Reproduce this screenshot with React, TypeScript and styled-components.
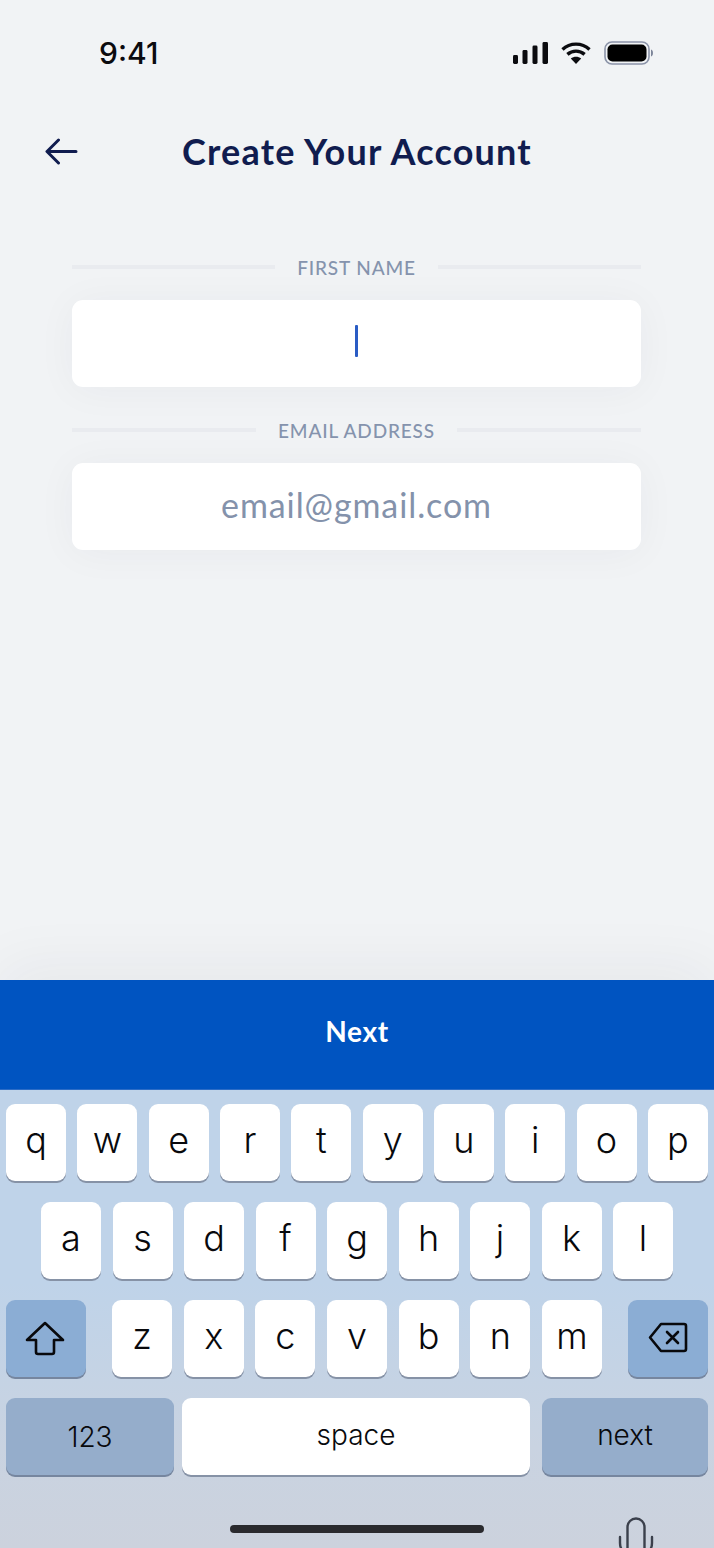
import React from 'react';
import styled, { createGlobalStyle } from 'styled-components';

const GlobalStyle = createGlobalStyle`
  html, body {
    margin: 0;
    padding: 0;
    background: #f1f3f5;
  }
  * {
    box-sizing: border-box;
  }
`;

const Page = styled.div`
  display: flex;
  flex-direction: column;
  width: 714px;
  height: 1548px;
  overflow: hidden;
  background: #f1f3f5;
  font-family: Lato, "Noto Sans", sans-serif;
`;

const StatusBar = styled.div`
  display: flex;
  align-items: center;
  justify-content: space-between;
  height: 106px;
  padding: 0 61px 0 99px;
`;

const Time = styled.span`
  font-family: Inter, sans-serif;
  font-size: 30px;
  font-weight: 500;
  color: #0b0b0f;
`;

const StatusIcons = styled.div`
  display: flex;
  align-items: center;
  gap: 13px;
`;

const Header = styled.header`
  display: grid;
  grid-template-columns: 1fr auto 1fr;
  align-items: center;
  height: 92px;
  padding: 0 45px 2px;
`;

const BackIcon = styled.svg`
  display: block;
  width: 33px;
  height: 27px;
`;

const Title = styled.h1`
  margin: 0;
  font-size: 36px;
  font-weight: 700;
  letter-spacing: 1.2px;
  color: #101c4f;
`;

const Form = styled.main`
  flex: 1;
  display: flex;
  flex-direction: column;
  gap: 33px;
  padding: 59px 73px 0 72px;
`;

const Field = styled.div`
  display: flex;
  flex-direction: column;
  gap: 23px;
`;

const LabelRow = styled.div`
  display: flex;
  align-items: center;
  gap: 22px;
  height: 20px;

  &::before,
  &::after {
    content: '';
    flex: 1;
    height: 4px;
    background: #e9ebef;
  }
`;

const Label = styled.label`
  font-size: 19px;
  font-weight: 500;
  letter-spacing: 0.85px;
  color: #8593ad;
`;

const InputBox = styled.div`
  display: flex;
  align-items: center;
  justify-content: center;
  height: 87px;
  padding-bottom: 5px;
  border-radius: 11px;
  background: #fff;
  box-shadow: 0 3px 40px rgba(40, 45, 70, 0.045);
`;

const Caret = styled.span`
  display: block;
  width: 3px;
  height: 32px;
  border-radius: 1px;
  background: #2a5cc4;
`;

const Placeholder = styled.span`
  font-size: 34px;
  font-weight: 400;
  letter-spacing: 0.9px;
  color: #8492ab;
`;

const NextBar = styled.button`
  display: flex;
  align-items: center;
  justify-content: center;
  flex: none;
  width: 100%;
  height: 110px;
  padding: 0 0 8px;
  border: 0;
  border-bottom: 1px solid #2c6cc6;
  background: #0054c1;
  box-shadow: 0 -14px 60px rgba(30, 30, 50, 0.05);
  font-family: inherit;
  font-size: 28px;
  font-weight: 700;
  letter-spacing: 0.7px;
  color: #fff;
`;

const Keyboard = styled.div`
  display: flex;
  flex-direction: column;
  flex: none;
  height: 458px;
  padding-top: 14px;
  background: linear-gradient(#bfd3e9 0%, #bfd3e9 42%, #c9d3e1 78%, #ccd2dd 100%);
`;

const KeyRows = styled.div`
  display: flex;
  flex-direction: column;
  gap: 21px;
  padding: 0 6px;
`;

const KeyRow = styled.div`
  display: flex;
  justify-content: space-between;
`;

const LetterGroup = styled.div<{ $gap: number }>`
  display: flex;
  justify-content: center;
  gap: ${props => props.$gap}px;
  flex: 1;
`;

const Key = styled.div<{ $tone?: 'light' | 'action' | 'muted'; $width: number; $size?: number }>`
  display: flex;
  align-items: center;
  justify-content: center;
  flex: none;
  width: ${props => props.$width}px;
  height: 77px;
  padding-bottom: ${props => (props.$size ? 3 : 5)}px;
  border-radius: 9px;
  background: ${props =>
    props.$tone === 'action' ? '#8badd4' : props.$tone === 'muted' ? '#95adcb' : '#fff'};
  box-shadow: 0 2px 0 ${props => (props.$tone ? '#76869f' : '#8692a6')};
  font-family: Inter, sans-serif;
  font-size: ${props => props.$size || 36}px;
  font-weight: 300;
  color: #08090c;
`;

const IconKey = styled(Key)`
  padding: 0 2px 0 0;
`;

const NumberKey = styled(Key)`
  padding-bottom: 0;
`;

const BottomRow = styled.div`
  display: flex;
`;

const SpaceKey = styled(Key)`
  margin: 0 12px 0 8px;
`;

const BottomBar = styled.div`
  display: grid;
  grid-template-columns: 1fr 254px 1fr;
  flex: 1;
  overflow: hidden;
`;

const HomeIndicator = styled.div`
  grid-column: 2;
  height: 8px;
  margin-top: 50px;
  border-radius: 4px;
  background: #2a2a2e;
`;

const MicIcon = styled.svg`
  display: block;
  width: 36px;
  height: 32px;
  margin: 42px 60px 0 auto;
`;

const rowOne = ['q', 'w', 'e', 'r', 't', 'y', 'u', 'i', 'o', 'p'];
const rowTwo = ['a', 's', 'd', 'f', 'g', 'h', 'j', 'k', 'l'];
const rowThree = ['z', 'x', 'c', 'v', 'b', 'n', 'm'];

const SignalIcon = () => (
  <svg width="35" height="22" viewBox="0 0 35 22" fill="#0b0b0f">
    <rect x="0" y="13" width="5" height="9" rx="1.4" />
    <rect x="9.5" y="8" width="5" height="14" rx="1.4" />
    <rect x="19.5" y="3.5" width="5" height="18.5" rx="1.4" />
    <rect x="29.5" y="0" width="5.5" height="22" rx="1.4" />
  </svg>
);

const WifiIcon = () => (
  <svg width="30" height="22" viewBox="0 0 30 22" fill="none" stroke="#0b0b0f" strokeWidth="3.4">
    <path d="M1.5 7.4C9 0.4 21 0.4 28.5 7.4" />
    <path d="M6.4 12.4C11.4 8 18.6 8 23.6 12.4" />
    <path d="M15 22L9.8 16.6C12.8 14 17.2 14 20.2 16.6Z" fill="#0b0b0f" stroke="none" />
  </svg>
);

const BatteryIcon = () => (
  <svg width="49" height="24" viewBox="0 0 49 24">
    <rect x="1" y="1" width="44" height="22" rx="7" fill="none" stroke="#8b93a8" strokeWidth="1.6" />
    <rect x="3.5" y="3.5" width="39" height="17" rx="5" fill="#000" />
    <path d="M47 8.5C48.4 9 49 10.4 49 12C49 13.6 48.4 15 47 15.5Z" fill="#7d8599" />
  </svg>
);

const ShiftIcon = () => (
  <svg width="40" height="35" viewBox="0 0 40 35" fill="none" stroke="#08090c" strokeWidth="2.6" strokeLinejoin="round">
    <path d="M20 2L38 19H29V31C29 32 28.4 33 27 33H13C11.6 33 11 32 11 31V19H2Z" />
  </svg>
);

const DeleteIcon = () => (
  <svg width="40" height="33" viewBox="0 0 40 33" fill="none" stroke="#08090c" strokeWidth="2.6" strokeLinejoin="round" strokeLinecap="round">
    <path d="M2 16.5L13 3H36C37.4 3 38 3.8 38 5V28C38 29.2 37.4 30 36 30H13Z" />
    <path d="M19 11L30 22M30 11L19 22" />
  </svg>
);

const App: React.FC = () => (
  <Page>
    <GlobalStyle />
    <StatusBar>
      <Time>9:41</Time>
      <StatusIcons>
        <SignalIcon />
        <WifiIcon />
        <BatteryIcon />
      </StatusIcons>
    </StatusBar>
    <Header>
      <BackIcon viewBox="0 0 33 27" fill="none" stroke="#101c4f" strokeWidth="3" strokeLinecap="round" strokeLinejoin="round">
        <path d="M31 13.5H2.5M13.5 2L2 13.5L13.5 25" />
      </BackIcon>
      <Title>Create Your Account</Title>
    </Header>
    <Form>
      <Field>
        <LabelRow>
          <Label>FIRST NAME</Label>
        </LabelRow>
        <InputBox>
          <Caret />
        </InputBox>
      </Field>
      <Field>
        <LabelRow>
          <Label>EMAIL ADDRESS</Label>
        </LabelRow>
        <InputBox>
          <Placeholder>email@gmail.com</Placeholder>
        </InputBox>
      </Field>
    </Form>
    <NextBar>Next</NextBar>
    <Keyboard>
      <KeyRows>
        <KeyRow>
          <LetterGroup $gap={11.3}>
            {rowOne.map(letter => (
              <Key key={letter} $width={60}>{letter}</Key>
            ))}
          </LetterGroup>
        </KeyRow>
        <KeyRow>
          <LetterGroup $gap={11.5}>
            {rowTwo.map(letter => (
              <Key key={letter} $width={60}>{letter}</Key>
            ))}
          </LetterGroup>
        </KeyRow>
        <KeyRow>
          <IconKey $tone="action" $width={80} $size={1}>
            <ShiftIcon />
          </IconKey>
          <LetterGroup $gap={11.67}>
            {rowThree.map(letter => (
              <Key key={letter} $width={60}>{letter}</Key>
            ))}
          </LetterGroup>
          <Key $tone="action" $width={80} $size={1}>
            <DeleteIcon />
          </Key>
        </KeyRow>
        <BottomRow>
          <NumberKey $tone="muted" $width={168} $size={28}>123</NumberKey>
          <SpaceKey $width={348} $size={28}>space</SpaceKey>
          <Key $tone="muted" $width={166} $size={28}>next</Key>
        </BottomRow>
      </KeyRows>
      <BottomBar>
        <HomeIndicator />
        <MicIcon viewBox="0 0 36 32" fill="none" stroke="#3b404c" strokeWidth="2.4" strokeLinecap="round">
          <rect x="9.5" y="1.5" width="17" height="40" rx="8.5" />
          <path d="M2 20V26C2 34 9 40 18 40C27 40 34 34 34 26V20" />
        </MicIcon>
      </BottomBar>
    </Keyboard>
  </Page>
);

export default App;
